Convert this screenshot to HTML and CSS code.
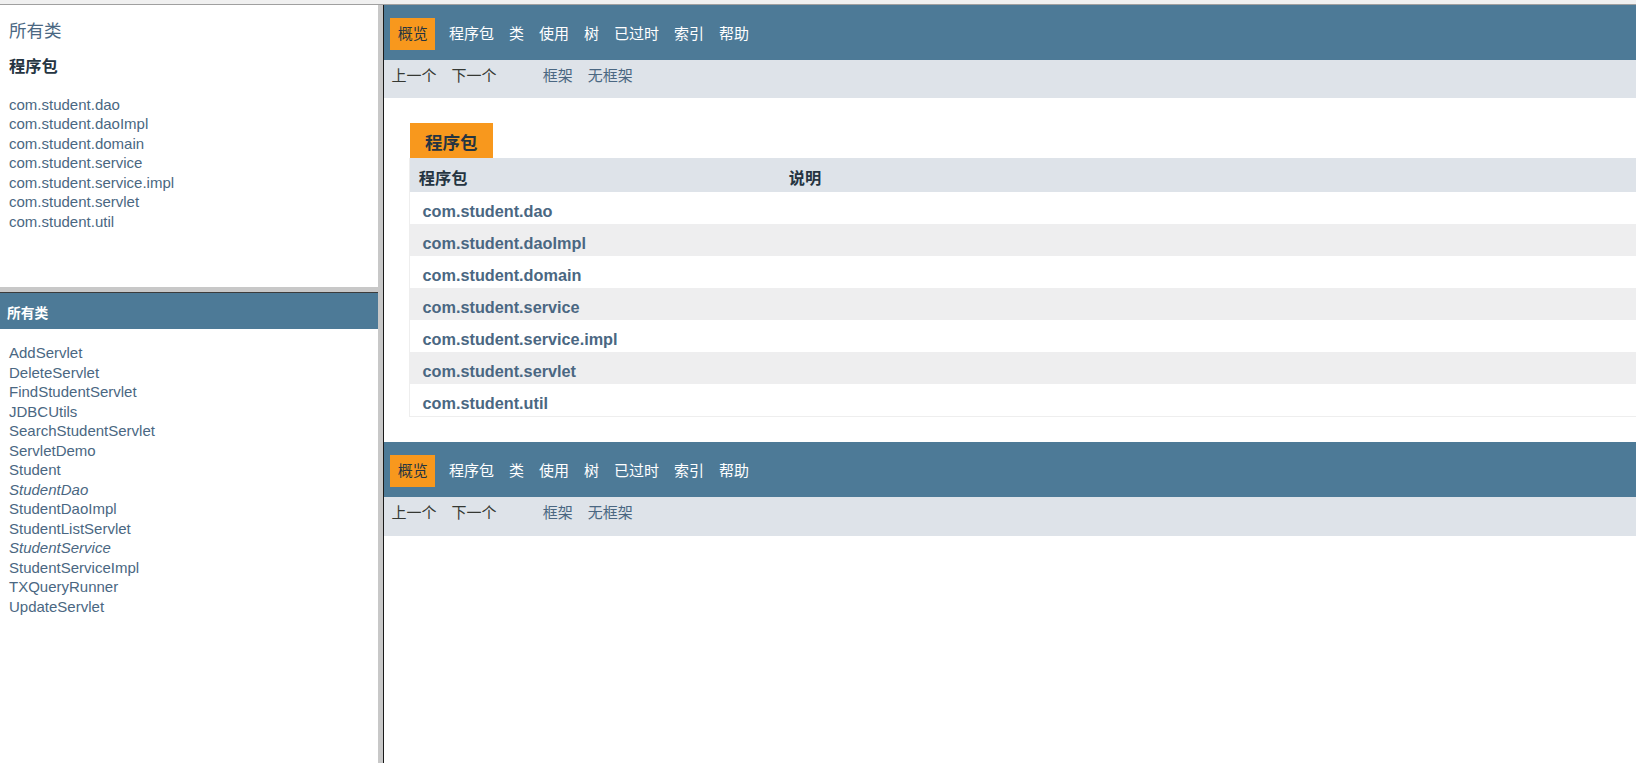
FILE: index.html
```html
<!DOCTYPE html>
<html lang="zh-CN">
<head>
<meta charset="utf-8">
<title>概览</title>
<link rel="stylesheet" href="styles.css">
</head>
<body>
<div class="window">
  <div class="chrome-top"></div>
  <div class="frameset">
    <div class="left">
      <div class="frame pkg-frame">
        <div class="index-header"><a href="#">所有类</a></div>
        <h2 class="index-title">程序包</h2>
        <ul class="index-list">
          <li><a href="#">com.student.dao</a></li>
          <li><a href="#">com.student.daoImpl</a></li>
          <li><a href="#">com.student.domain</a></li>
          <li><a href="#">com.student.service</a></li>
          <li><a href="#">com.student.service.impl</a></li>
          <li><a href="#">com.student.servlet</a></li>
          <li><a href="#">com.student.util</a></li>
        </ul>
      </div>
      <div class="hsplit"></div>
      <div class="frame class-frame">
        <h1 class="bar">所有类</h1>
        <ul class="index-list classes">
          <li><a href="#">AddServlet</a></li>
          <li><a href="#">DeleteServlet</a></li>
          <li><a href="#">FindStudentServlet</a></li>
          <li><a href="#">JDBCUtils</a></li>
          <li><a href="#">SearchStudentServlet</a></li>
          <li><a href="#">ServletDemo</a></li>
          <li><a href="#">Student</a></li>
          <li><a href="#" class="iface">StudentDao</a></li>
          <li><a href="#">StudentDaoImpl</a></li>
          <li><a href="#">StudentListServlet</a></li>
          <li><a href="#" class="iface">StudentService</a></li>
          <li><a href="#">StudentServiceImpl</a></li>
          <li><a href="#">TXQueryRunner</a></li>
          <li><a href="#">UpdateServlet</a></li>
        </ul>
      </div>
    </div>
    <div class="vsplit"></div>
    <div class="frame main-frame">
      <div class="top-nav">
        <ul class="nav-list">
          <li class="current">概览</li>
          <li>程序包</li>
          <li>类</li>
          <li>使用</li>
          <li><a href="#">树</a></li>
          <li><a href="#">已过时</a></li>
          <li><a href="#">索引</a></li>
          <li><a href="#">帮助</a></li>
        </ul>
      </div>
      <div class="sub-nav">
        <ul class="nav-list">
          <li>上一个</li>
          <li>下一个</li>
        </ul>
        <ul class="nav-list">
          <li><a href="#">框架</a></li>
          <li><a href="#">无框架</a></li>
        </ul>
      </div>
      <div class="content">
        <table class="overview">
          <caption><span>程序包</span></caption>
          <colgroup><col class="col-first"><col></colgroup>
          <thead>
            <tr><th>程序包</th><th>说明</th></tr>
          </thead>
          <tbody>
            <tr><td><a href="#">com.student.dao</a></td><td></td></tr>
            <tr><td><a href="#">com.student.daoImpl</a></td><td></td></tr>
            <tr><td><a href="#">com.student.domain</a></td><td></td></tr>
            <tr><td><a href="#">com.student.service</a></td><td></td></tr>
            <tr><td><a href="#">com.student.service.impl</a></td><td></td></tr>
            <tr><td><a href="#">com.student.servlet</a></td><td></td></tr>
            <tr><td><a href="#">com.student.util</a></td><td></td></tr>
          </tbody>
        </table>
      </div>
      <div class="top-nav bottom-nav">
        <ul class="nav-list">
          <li class="current">概览</li>
          <li>程序包</li>
          <li>类</li>
          <li>使用</li>
          <li><a href="#">树</a></li>
          <li><a href="#">已过时</a></li>
          <li><a href="#">索引</a></li>
          <li><a href="#">帮助</a></li>
        </ul>
      </div>
      <div class="sub-nav sub-nav-bottom">
        <ul class="nav-list">
          <li>上一个</li>
          <li>下一个</li>
        </ul>
        <ul class="nav-list">
          <li><a href="#">框架</a></li>
          <li><a href="#">无框架</a></li>
        </ul>
      </div>
    </div>
  </div>
</div>
</body>
</html>
```

FILE: styles.css
```css
* { box-sizing: border-box; }
html, body { margin: 0; padding: 0; height: 100%; overflow: hidden; }
body {
  font-family: "Liberation Sans", "Noto Sans CJK SC", sans-serif;
  color: #353833;
  background: #ffffff;
}
a { color: #4a6782; text-decoration: none; }

.window { display: flex; flex-direction: column; height: 763px; }
.chrome-top { flex: none; height: 5px; background: #f0f0f0; border-bottom: 1px solid #a0a0a0; }
.frameset { flex: 1; min-height: 0; display: grid; grid-template-columns: 378px 6px 1fr; }

.left { display: grid; grid-template-rows: 282px 6px 1fr; min-height: 0; }
.frame { background: #ffffff; overflow: hidden; min-height: 0; }
.vsplit { background: #c8c8c8; border-right: 1px solid #1a1a1a; }
.hsplit { background: #c8c8c8; border-bottom: 1px solid #3c3c3c; }

/* left top: packages */
.pkg-frame { padding: 16px 0 0 9px; }
.index-header { font-size: 17.5px; line-height: 20px; }
.index-title {
  margin: 14.5px 0 0;
  font-size: 16.25px;
  line-height: 20px;
  font-weight: bold;
  color: #253441;
}
.index-list {
  margin: 19px 0 0;
  padding: 0;
  list-style: none;
  font-size: 15px;
  line-height: 19.5px;
}
.iface { font-style: italic; }

/* left bottom: classes */
.bar {
  margin: 0;
  height: 36px;
  padding: 13px 0 0 7px;
  background: #4d7a97;
  color: #ffffff;
  font-size: 13.75px;
  line-height: 16px;
  font-weight: bold;
}
.classes { margin-top: 14px; padding-left: 9px; }

/* main frame */
.top-nav {
  height: 55px;
  padding-top: 13px;
  background: #4d7a97;
  color: #ffffff;
}
.top-nav a { color: #ffffff; }
.nav-list {
  display: flex;
  margin: 0;
  padding: 0;
  list-style: none;
  font-size: 15px;
  line-height: 19.5px;
  white-space: nowrap;
}
.nav-list li { padding: 6.25px 7.5px; }
.top-nav .current {
  margin: 0 6.25px;
  background: #f8981d;
  color: #253441;
}
.bottom-nav { margin-top: 12.5px; }

.sub-nav {
  display: flex;
  height: 38px;
  background: #dee3e9;
}
.sub-nav .nav-list { margin-right: 31.25px; }
.sub-nav-bottom { height: 39px; }

.content { padding: 12.5px 0 12.5px 25px; }
.overview {
  width: 100%;
  table-layout: fixed;
  border-collapse: separate;
  border-spacing: 0;
  border-left: 1px solid #eeeeee;
  border-bottom: 1px solid #eeeeee;
}
.overview caption {
  caption-side: top;
  text-align: left;
  padding: 12.5px 0 0 1px;
}
.overview caption span {
  display: block;
  width: max-content;
  height: 35px;
  padding: 10px 15px 5px;
  background: #f8981d;
  color: #253441;
  font-size: 17.5px;
  line-height: 20px;
  font-weight: bold;
}
.col-first { width: 370px; }
.overview th {
  background: #dee3e9;
  color: #253441;
  text-align: left;
  font-weight: bold;
  font-size: 16.25px;
  line-height: 20px;
  padding: 10px 0 3.75px 8.75px;
}
.overview td {
  font-size: 16.25px;
  line-height: 18.25px;
  font-weight: bold;
  padding: 10px 0 3.75px 12.5px;
  white-space: nowrap;
}
.overview tbody tr:nth-child(odd) { background: #ffffff; }
.overview tbody tr:nth-child(even) { background: #eeeeef; }
```
